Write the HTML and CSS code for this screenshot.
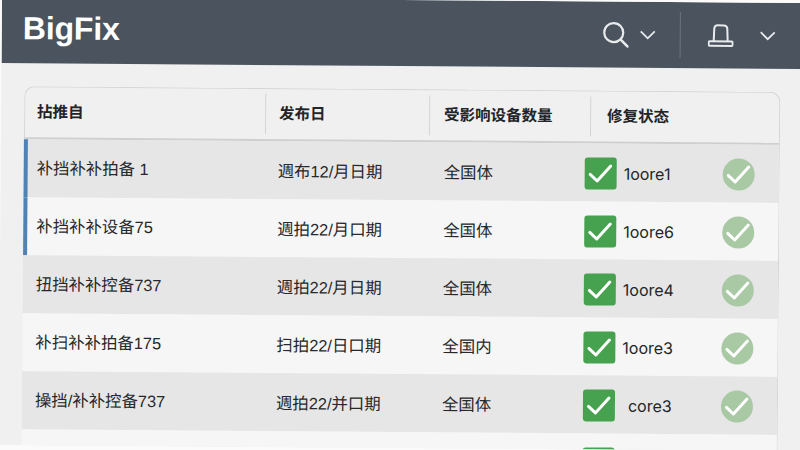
FILE: index.html
```html
<!DOCTYPE html>
<html lang="zh-CN">
<head>
  <meta charset="UTF-8" />
  <title>BigFix</title>
  <link rel="stylesheet" href="styles.css">
</head>
<body>
  <svg class="defs" width="0" height="0">
    <symbol id="tick" viewBox="0 0 32 32">
      <path d="M5.5 17l7 6.5L26 8.5" fill="none" stroke="#fff" stroke-width="3" stroke-linecap="round" stroke-linejoin="round"/>
    </symbol>
  </svg>

  <div class="page">
    <header class="topbar">
      <div class="logo">BigFix</div>
      <div class="topbar-actions">
        <button class="icon-btn search-btn" aria-label="搜索">
          <svg width="26" height="26" viewBox="0 0 26 26"><circle cx="11" cy="11" r="9.5" fill="none" stroke="#e8eaec" stroke-width="2.2"/><path d="M18 18l7 7" stroke="#e8eaec" stroke-width="2.6" stroke-linecap="round"/></svg>
          <svg class="chevron" width="16" height="10" viewBox="0 0 16 10"><path d="M1 1.5l7 7 7-7" fill="none" stroke="#e8eaec" stroke-width="1.8"/></svg>
        </button>
        <span class="divider"></span>
        <button class="icon-btn user-btn" aria-label="通知">
          <svg width="26" height="24" viewBox="0 0 26 24"><path d="M6 18L6.500 5a3.500 3.500 0 0 1 3.500-3h6a3.500 3.500 0 0 1 3.500 3L20 18" fill="none" stroke="#e8eaec" stroke-width="2"/><rect x="1" y="18" width="24" height="4.500" rx="1" fill="none" stroke="#e8eaec" stroke-width="2"/></svg>
          <svg class="chevron" width="16" height="10" viewBox="0 0 16 10"><path d="M1 1.5l7 7 7-7" fill="none" stroke="#e8eaec" stroke-width="1.8"/></svg>
        </button>
      </div>
    </header>

    <main class="content">
      <section class="patch-table">
        <div class="table-head">
          <div class="th">拈推自</div>
          <div class="th">发布日</div>
          <div class="th">受影响设备数量</div>
          <div class="th">修复状态</div>
        </div>

        <div class="row shaded flagged">
          <div class="cell">补挡补补拍备 1</div>
          <div class="cell">週布12/月日期</div>
          <div class="cell">全国体</div>
          <div class="status">
            <span class="check"><svg width="32" height="32"><use href="#tick"/></svg></span>
            <span class="score">1oore1</span>
            <span class="done"><svg width="32" height="32"><use href="#tick"/></svg></span>
          </div>
        </div>
        <div class="row flagged">
          <div class="cell">补挡补补设备75</div>
          <div class="cell">週拍22/月口期</div>
          <div class="cell">全国体</div>
          <div class="status">
            <span class="check"><svg width="32" height="32"><use href="#tick"/></svg></span>
            <span class="score">1oore6</span>
            <span class="done"><svg width="32" height="32"><use href="#tick"/></svg></span>
          </div>
        </div>
        <div class="row shaded">
          <div class="cell">扭挡补补控备737</div>
          <div class="cell">週拍22/月日期</div>
          <div class="cell">全国体</div>
          <div class="status">
            <span class="check"><svg width="32" height="32"><use href="#tick"/></svg></span>
            <span class="score">1oore4</span>
            <span class="done"><svg width="32" height="32"><use href="#tick"/></svg></span>
          </div>
        </div>
        <div class="row">
          <div class="cell">补扫补补拍备175</div>
          <div class="cell">扫拍22/日口期</div>
          <div class="cell">全国内</div>
          <div class="status">
            <span class="check"><svg width="32" height="32"><use href="#tick"/></svg></span>
            <span class="score">1oore3</span>
            <span class="done"><svg width="32" height="32"><use href="#tick"/></svg></span>
          </div>
        </div>
        <div class="row shaded">
          <div class="cell">操挡/补补控备737</div>
          <div class="cell">週拍22/并口期</div>
          <div class="cell">全国体</div>
          <div class="status">
            <span class="check"><svg width="32" height="32"><use href="#tick"/></svg></span>
            <span class="score score-short">core3</span>
            <span class="done"><svg width="32" height="32"><use href="#tick"/></svg></span>
          </div>
        </div>
        <div class="row row-cut">
          <div class="cell"></div>
          <div class="cell"></div>
          <div class="cell"></div>
          <div class="status">
            <span class="check"><svg width="32" height="32"><use href="#tick"/></svg></span>
          </div>
        </div>
      </section>
    </main>
  </div>
</body>
</html>
```

FILE: styles.css
```css
body {
  margin: 0;
  height: 450px;
  overflow: hidden;
  background: #fbfbfb;
  color: #222427;
  font-family: "Liberation Sans", "Noto Sans CJK SC", sans-serif;
}

.defs {
  display: block;
  height: 0;
}

/* the whole shot sits slightly tilted */
.page {
  width: 806px;
  height: 448px;
  margin: -3px 0 0 2px;
  overflow: hidden;
  background: #f0f0f0;
  transform: rotate(0.43deg);
  transform-origin: 0 0;
}

.topbar {
  height: 66px;
  padding: 0 32px 0 21px;
  background: #4a535e;
  display: flex;
  justify-content: space-between;
  align-items: center;
}

.logo {
  color: #fff;
  font-size: 32px;
  font-weight: bold;
  letter-spacing: -0.15px;
  margin-top: -3px;
}

.topbar-actions {
  display: flex;
  align-items: center;
}

.icon-btn {
  background: none;
  border: none;
  padding: 0;
  display: flex;
  align-items: center;
}

.search-btn {
  gap: 11px;
  margin-right: 24px;
}

.user-btn {
  gap: 26px;
}

.divider {
  width: 1px;
  height: 46px;
  margin-right: 27px;
  background: #6d7580;
}

.content {
  padding: 23px 27px 0 23px;
}

.patch-table {
  border: 1px solid #d6d6d6;
  border-bottom: none;
  border-radius: 10px 10px 0 0;
}

.table-head,
.row {
  display: grid;
  align-items: center;
}

.table-head {
  grid-template-columns: 240px 164px 161px 1fr;
  height: 50px;
  border-bottom: 2px solid #cfcfcf;
}

.th {
  height: 40px;
  line-height: 40px;
  font-size: 15.5px;
  font-weight: bold;
  border-left: 1px solid #d4d4d4;
}

.th:nth-child(1) {
  border-left: none;
  padding-left: 12px;
}

.th:nth-child(2) {
  padding-left: 13px;
}

.th:nth-child(3) {
  padding-left: 14px;
}

.th:nth-child(4) {
  padding-left: 16px;
}

.row {
  grid-template-columns: 237px 164px 161px 1fr;
  height: 58px;
  background: #f6f6f6;
  border-left: 4px solid transparent;
  margin-left: -1px;
}

.row.shaded {
  background: #e6e6e6;
}

.row.flagged {
  border-left-color: #4f83b5;
}

.row-cut {
  height: 16px;
  overflow: hidden;
  align-items: start;
}

.row-cut .status {
  padding-top: 14px;
}

.cell {
  font-size: 16.4px;
  color: #26282b;
}

.cell:nth-child(1) {
  padding: 0 0 3px 9px;
}

.cell:nth-child(2) {
  padding-left: 13px;
}

.cell:nth-child(3) {
  padding-left: 15px;
}

.status {
  display: flex;
  align-items: center;
  margin-left: -5px;
  padding-top: 2px;
}

.check,
.done {
  width: 32px;
  height: 32px;
  display: block;
  flex: none;
}

.check {
  background: #46a24f;
  border-radius: 3px;
}

.done {
  background: #a9c8a4;
  border-radius: 50%;
  margin-left: auto;
  margin-right: 24px;
}

.score {
  margin-left: 7px;
  font-size: 16px;
  font-family: "Inter", "Liberation Sans", sans-serif;
}

.score-short {
  margin-left: 13px;
}
```
